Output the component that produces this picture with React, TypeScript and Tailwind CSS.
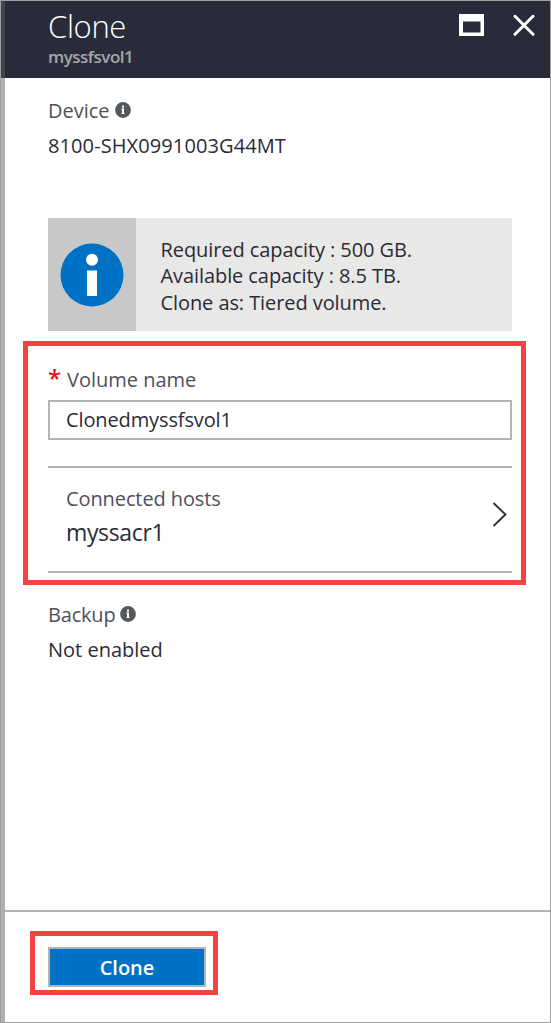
function InfoDot() {
  return (
    <svg width="16" height="16" viewBox="0 0 16 16" className="shrink-0">
      <circle cx="8" cy="8" r="7.9" fill="#54585d" />
      <rect x="7" y="3.6" width="2" height="2" fill="#fff" />
      <rect x="7" y="6.5" width="2" height="5.2" fill="#fff" />
      <rect x="6.3" y="6.5" width="1" height="1" fill="#fff" />
      <rect x="6.3" y="10.9" width="3.4" height="0.9" fill="#fff" />
    </svg>
  );
}

export default function App() {
  return (
    <div className="flex h-[1023px] w-[551px] flex-col border border-[#a0a0a0] bg-white font-['Open_Sans','Noto_Sans',sans-serif] text-[20px] leading-[26px] text-[#2b2b38]">
      <header className="flex h-[77px] shrink-0 justify-between border-l-4 border-[#394550] bg-[#2a2b3a] pl-[43px]">
        <div className="flex flex-col items-start pt-[5px]">
          <h1 className="text-[31px] font-light leading-10 tracking-[-0.35px] text-white">Clone</h1>
          <p className="text-[17px] font-semibold leading-[22px] tracking-[-0.5px] text-[#a3a8a6]">myssfsvol1</p>
        </div>
        <div className="flex items-start pr-[15px] pt-[13px]">
          <svg width="25" height="22" viewBox="0 0 25 22" className="mr-[29px]">
            <path d="M0 0H25V22H0ZM4 7.5V18.5H21.5V7.5Z" fill="#fff" fillRule="evenodd" />
          </svg>
          <svg width="22" height="22" viewBox="0 0 22 22">
            <path d="M2 2.3L20 20.3M20 2.3L2 20.3" stroke="#fff" strokeWidth="3" strokeLinecap="round" />
          </svg>
        </div>
      </header>
      <div className="flex grow flex-col border-l-4 border-[#b0b0b0]">
        <main className="flex grow flex-col pt-5">
          <div className="flex items-start gap-[5px] pl-[43px] text-[#50505a]">
            <span>Device</span>
            <span className="pt-1"><InfoDot /></span>
          </div>
          <div className="mt-[9px] pl-[43px] tracking-[0.1px]">8100-SHX0991003G44MT</div>
          <section className="ml-[43px] mt-[59px] flex h-[113px] w-[464px] bg-[#e8e8e6]">
            <div className="flex w-[88px] items-center justify-center bg-[#c8c8c8]">
              <svg width="64" height="64" viewBox="0 0 64 64">
                <circle cx="32" cy="32" r="31.5" fill="#0072c6" />
                <circle cx="32" cy="16.7" r="6" fill="#fff" />
                <rect x="27" y="27.5" width="10" height="25.5" fill="#fff" />
              </svg>
            </div>
            <div className="flex flex-col items-start pl-[24.5px] pt-[18.6px] leading-[26.5px] tracking-[-0.08px]">
              <p>Required capacity : 500 GB.</p>
              <p>Available capacity : 8.5 TB.</p>
              <p>Clone as: Tiered volume.</p>
            </div>
          </section>
          <section className="ml-[18px] mt-[10px] h-[244px] w-[503px] border-[5px] border-[#f84242] pl-5 pr-[9px] pt-[21px]">
            <div className="flex text-[#50505a]">
              <span className="w-[19px] text-[24px] font-semibold leading-[22px] text-[#e81123]">*</span>
              <span>Volume name</span>
            </div>
            <div className="mt-[7px] flex h-10 items-center border-2 border-[#b4b4b4] pl-4 tracking-[-0.12px]">
              Clonedmyssfsvol1
            </div>
            <div className="mt-[26px] flex h-[107px] justify-between border-y-2 border-[#b4b4b4] pl-[18px] pt-[18px]">
              <div className="flex flex-col items-start">
                <span className="tracking-[-0.1px] text-[#50505a]">Connected hosts</span>
                <span className="mt-[5px] text-[23px] leading-[30px] tracking-[-0.35px]">myssacr1</span>
              </div>
              <svg width="16" height="26" viewBox="0 0 16 26" className="mr-[4px] mt-[15px]">
                <path d="M1.5 2L13.5 13.5L1.5 25" fill="none" stroke="#2b2b38" strokeWidth="1.8" />
              </svg>
            </div>
          </section>
          <div className="mt-[17px] flex items-start gap-[5px] pl-[43px] text-[#50505a]">
            <span className="tracking-[-0.2px]">Backup</span>
            <span className="pt-1"><InfoDot /></span>
          </div>
          <div className="mt-[9px] pl-[43px]">Not enabled</div>
        </main>
        <footer className="h-[112px] shrink-0 border-t-2 border-[#b4b4b4] pl-[25px] pt-[19px]">
          <div className="h-16 w-[188px] border-[5px] border-[#f84242] p-[11px] pl-[13px]">
            <button className="flex h-10 w-[158px] items-center justify-center border-2 border-[#b4b4b4] bg-[#0072c6] pt-px font-semibold text-white">
              Clone
            </button>
          </div>
        </footer>
      </div>
    </div>
  );
}
